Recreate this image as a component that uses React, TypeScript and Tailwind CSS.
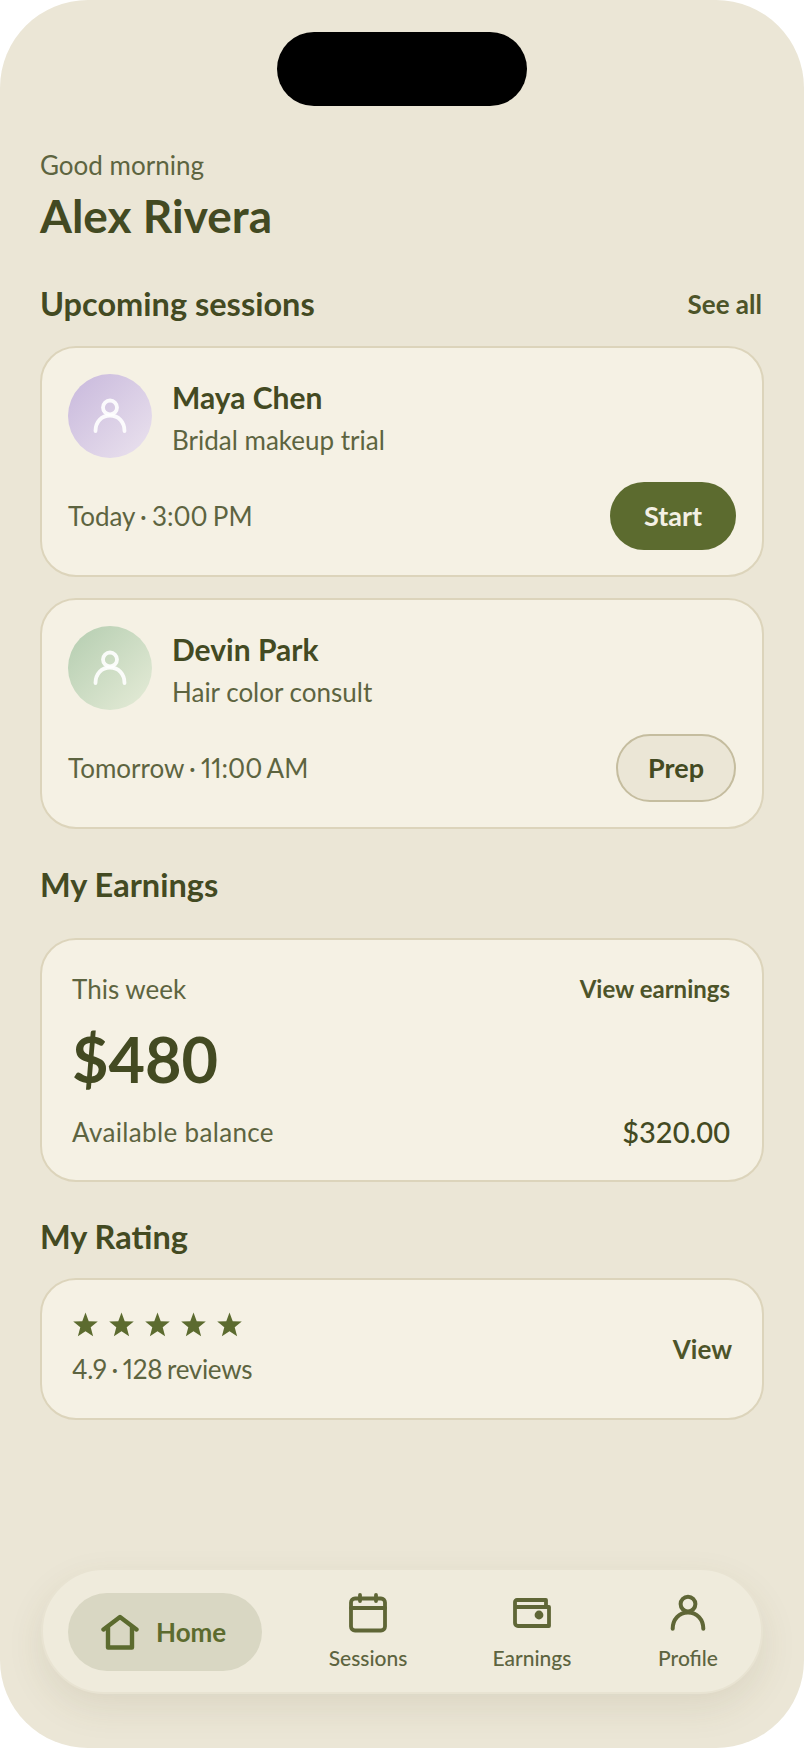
import React from "react";

const font = { fontFamily: '"Lato", "Noto Sans", sans-serif' };

function PersonIcon({ className }: { className?: string }) {
  return (
    <svg viewBox="0 0 36 36" fill="none" stroke="currentColor" strokeWidth="3.8" strokeLinecap="round" className={className}>
      <circle cx="18" cy="9.5" r="7" />
      <path d="M3.5 33c0-9 6-15.500 14.500-15.500S32.500 24 32.500 33" />
    </svg>
  );
}

function HomeIcon() {
  return (
    <svg viewBox="0 0 38 36" fill="none" stroke="currentColor" strokeWidth="4.400" strokeLinejoin="round" strokeLinecap="round" className="h-[36px] w-[38px]">
      <path d="M2.500 15.500 19 3l16.500 12.500" />
      <path d="M7 13v20.500h24V13" />
    </svg>
  );
}

function CalendarIcon() {
  return (
    <svg viewBox="0 0 38 40" fill="none" stroke="currentColor" strokeWidth="3.800" strokeLinecap="round" className="h-[40px] w-[38px]">
      <rect x="2" y="5.500" width="34" height="32" rx="4" />
      <path d="M2 15h34M11 2v6M27 2v6" />
    </svg>
  );
}

function WalletIcon() {
  return (
    <svg viewBox="0 0 38 30" fill="none" stroke="currentColor" strokeWidth="3.800" strokeLinejoin="round" className="h-[30px] w-[38px]">
      <path d="M4 2h29v7h3v19H5a3 3 0 0 1-3-3V4a2 2 0 0 1 2-2Z" />
      <path d="M2 9h34" />
      <circle cx="26" cy="17" r="2.500" fill="currentColor" />
    </svg>
  );
}

function Star() {
  return (
    <svg viewBox="0 0 24 24" className="h-[25px] w-[25px] fill-[#5c6b2f]">
      <path d="M12 .5l3.100 8.300 8.700.4-6.800 5.500 2.300 8.500L12 18.400l-7.300 4.800L7 14.700.2 9.200l8.700-.4z" />
    </svg>
  );
}

function SessionCard({
  name,
  service,
  when,
  avatar,
  action,
}: {
  name: string;
  service: string;
  when: string;
  avatar: string;
  action: React.ReactNode;
}) {
  return (
    <div className="flex h-[231px] flex-col rounded-[36px] border-2 border-[#dcd4bb] bg-[#f5f1e4] px-[26px] pt-[25px]">
      <div className="flex items-center gap-[20px]">
        <div className={`flex h-[84px] w-[84px] items-center justify-center rounded-full text-white/90 ${avatar}`}>
          <PersonIcon className="h-[36px] w-[36px]" />
        </div>
        <div className="mt-[4px]">
          <div className="text-[30px] leading-[40px] font-bold text-[#434a22]">{name}</div>
          <div className="mt-[5px] text-[26px] leading-[36px] text-[#5d6440]">{service}</div>
        </div>
      </div>
      <div className="mt-[24px] flex h-[68px] items-center justify-between">
        <span className="text-[26px] [word-spacing:-1.5px] text-[#5d6440] proportional-nums">{when}</span>
        {action}
      </div>
    </div>
  );
}

function NavItem({ label, icon }: { label: string; icon: React.ReactNode }) {
  return (
    <div className="flex w-[100px] flex-col items-center gap-[11px]">
      <div className="flex h-[42px] items-center justify-center text-[#5f6636]">{icon}</div>
      <span className="text-[21px] leading-[26px] font-medium text-[#5d6440]">{label}</span>
    </div>
  );
}

export default function App() {
  return (
    <div className="h-[1748px] w-[804px] bg-white" style={font}>
      <div className="flex h-full flex-col overflow-hidden rounded-[88px] bg-[#ebe6d6] px-[40px]">
        <div className="mx-auto mt-[32px] h-[74px] w-[250px] shrink-0 rounded-[37px] bg-black" />

        <div className="mt-[41px] text-[26px] leading-[36px] text-[#5d6440]">Good morning</div>
        <div className="mt-[5px] text-[46px] leading-[56px] font-bold text-[#434a22]">Alex Rivera</div>

        <div className="mt-[39px] flex items-center justify-between pr-[2px]">
          <h2 className="text-[32.5px] leading-[42px] font-bold text-[#434a22]">Upcoming sessions</h2>
          <span className="text-[26px] leading-[36px] font-bold text-[#4d5429]">See all</span>
        </div>

        <div className="mt-[21px] flex flex-col gap-[21px]">
          <SessionCard
            name="Maya Chen"
            service="Bridal makeup trial"
            when="Today · 3:00 PM"
            avatar="bg-gradient-to-br from-[#c8b8dc] to-[#ebe3ee]"
            action={
              <button className="flex h-[68px] w-[126px] items-center justify-center rounded-[34px] bg-[#5c6b2f] text-[27px] font-bold text-[#f4f0e4]">
                Start
              </button>
            }
          />
          <SessionCard
            name="Devin Park"
            service="Hair color consult"
            when="Tomorrow · 11:00 AM"
            avatar="bg-gradient-to-br from-[#b4cdb0] to-[#e6ecd8]"
            action={
              <button className="flex h-[68px] w-[120px] items-center justify-center rounded-[34px] border-2 border-[#c5bd9f] bg-[#ebe6d6] text-[27px] font-bold text-[#434a22]">
                Prep
              </button>
            }
          />
        </div>

        <h2 className="mt-[35px] text-[32.5px] leading-[42px] font-bold text-[#434a22]">My Earnings</h2>

        <div className="mt-[32px] flex h-[244px] flex-col rounded-[36px] border-2 border-[#dcd4bb] bg-[#f5f1e4] pt-[31px] pr-[32px] pl-[30px]">
          <div className="flex items-center justify-between">
            <span className="text-[26px] leading-[36px] text-[#5d6440]">This week</span>
            <span className="text-[24px] leading-[36px] font-bold text-[#4d5429]">View earnings</span>
          </div>
          <div className="mt-[14px] text-[63px] leading-[76px] font-bold text-[#434a22]">$480</div>
          <div className="mt-[17px] flex items-center justify-between">
            <span className="text-[26px] leading-[36px] tracking-[0.35px] text-[#5d6440]">Available balance</span>
            <span className="text-[29px] leading-[36px] font-medium text-[#434a22]">$320.00</span>
          </div>
        </div>

        <h2 className="mt-[34px] text-[32.5px] leading-[42px] font-bold text-[#434a22]">My Rating</h2>

        <div className="mt-[20px] flex h-[142px] items-center justify-between rounded-[36px] border-2 border-[#dcd4bb] bg-[#f5f1e4] px-[30px]">
          <div>
            <div className="ml-[1px] flex gap-[11px]">
              <Star />
              <Star />
              <Star />
              <Star />
              <Star />
            </div>
            <div className="mt-[14px] text-[26px] leading-[36px] [word-spacing:-1.5px] tracking-[-0.3px] text-[#5d6440] proportional-nums">
              4.9 · 128 reviews
            </div>
          </div>
          <span className="text-[26px] font-bold text-[#4d5429]">View</span>
        </div>

        <nav className="mx-[1px] mt-auto mb-[54px] flex h-[126px] items-center rounded-[63px] border-2 border-[#e8e3d2] bg-[#efebdc] pr-[23px] pl-[25px] shadow-[0_14px_36px_rgba(90,80,40,0.10)]">
          <div className="mt-[2px] flex h-[78px] w-[194px] items-center gap-[17px] rounded-[39px] bg-[#d9d7c3] pl-[33px] text-[#5c6b2f]">
            <HomeIcon />
            <span className="text-[26px] font-bold text-[#5c6b2f]">Home</span>
          </div>
          <div className="ml-auto flex items-center gap-[64px]">
            <NavItem label="Sessions" icon={<CalendarIcon />} />
            <NavItem label="Earnings" icon={<WalletIcon />} />
            <div className="-ml-[8px]">
              <NavItem label="Profile" icon={<PersonIcon className="h-[38px] w-[38px]" />} />
            </div>
          </div>
        </nav>
      </div>
    </div>
  );
}
